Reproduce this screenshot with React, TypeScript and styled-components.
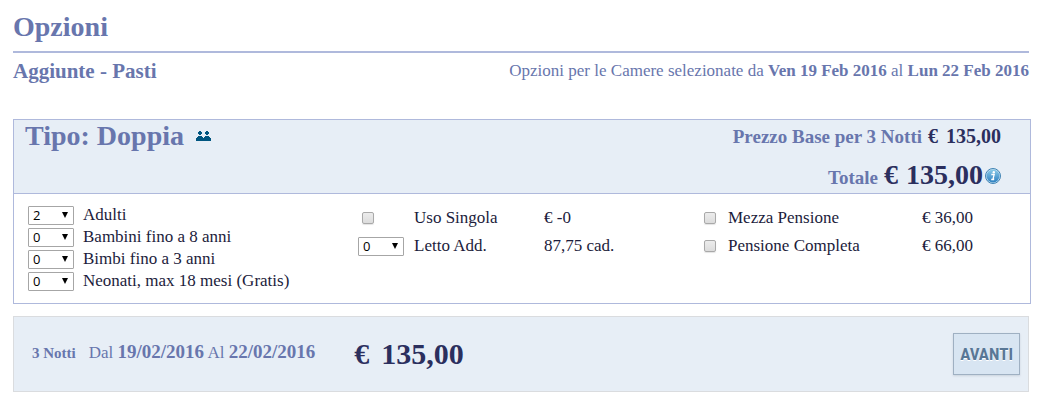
import React, { useId } from "react";
import styled, { createGlobalStyle } from "styled-components";

const GlobalStyle = createGlobalStyle`
  * { box-sizing: border-box; }
  body {
    margin: 0;
    background: #fff;
    color: #1c1c3c;
    font-family: Georgia, "Liberation Serif", serif;
    font-size: 17px;
    line-height: 20px;
  }
`;

const Page = styled.main`
  padding: 12px 8px 12px 13px;
`;

const Title = styled.h1`
  margin: 0 2px 0 0;
  padding-bottom: 9px;
  border-bottom: 2px solid #afb9dc;
  color: #6876ad;
  font-size: 28px;
  line-height: 30px;
`;

const SubHeader = styled.header`
  display: flex;
  justify-content: space-between;
  align-items: flex-start;
  margin: 6px 2px 36px 0;
  color: #6876ad;
`;

const SubTitle = styled.h2`
  margin: 0;
  font-size: 21px;
  line-height: 24px;
`;

const Note = styled.p`
  margin: 0;
  line-height: 24px;
`;

const RoomPanel = styled.section`
  border: 1px solid #afb9dc;
`;

const RoomHeader = styled.header`
  display: flex;
  justify-content: space-between;
  padding: 0 29px 0 11px;
  background: #e7eef6;
  border-bottom: 1px solid #afb9dc;
`;

const RoomTitle = styled.h3`
  display: flex;
  align-items: center;
  gap: 12px;
  height: 32px;
  margin: 0;
  color: #6876ad;
  font-size: 28px;
  line-height: 32px;
`;

const Prices = styled.div`
  display: flex;
  flex-direction: column;
  align-items: flex-end;
  color: #6876ad;
  font-size: 19px;
  font-weight: bold;
`;

const PriceLine = styled.div<{ $height: number }>`
  display: flex;
  align-items: baseline;
  gap: 6px;
  height: ${(p) => p.$height}px;
  line-height: 32px;
`;

const Amount = styled.span<{ $size: number; $gap: number }>`
  display: inline-flex;
  gap: ${(p) => p.$gap}px;
  color: #2b2f5e;
  font-size: ${(p) => p.$size}px;
  font-weight: bold;
`;

const InfoButton = styled.button`
  align-self: center;
  display: block;
  width: 16px;
  height: 16px;
  margin-left: -4px;
  padding: 0;
  border: 0;
  background: none;
`;

const RoomBody = styled.div`
  display: grid;
  grid-template-columns: 330fr 342fr 330fr;
  padding: 10px 0 11px 14px;
`;

const Guests = styled.div`
  display: flex;
  flex-direction: column;
`;

const GuestRow = styled.div`
  display: flex;
  align-items: center;
  gap: 9px;
  height: 22px;
`;

const Extras = styled.div<{ $columns: string }>`
  display: grid;
  grid-template-columns: ${(p) => p.$columns};
  grid-auto-rows: 28px;
  align-content: start;
  align-items: center;
`;

const SelectBox = styled.span`
  position: relative;
  display: inline-block;
  width: 46px;
  height: 19px;

  &::after {
    content: "";
    position: absolute;
    top: 6px;
    right: 6px;
    border: solid transparent;
    border-width: 6px 3px 0;
    border-top-color: #000;
    pointer-events: none;
  }
`;

const Select = styled.select`
  appearance: none;
  display: block;
  width: 100%;
  height: 100%;
  padding: 0 0 0 4px;
  border: 1px solid #a6a6a6;
  border-radius: 1px;
  background: #fff;
  color: #000;
  font: 13px/17px "Open Sans", "Noto Sans", sans-serif;
`;

const Check = styled.input`
  appearance: none;
  width: 12px;
  height: 12px;
  margin: 0 0 0 4px;
  border: 1px solid #a9a9a9;
  border-radius: 2px;
  background: linear-gradient(#ececec, #dcdcdc);
  box-shadow: 0 1px 1px #e4e4e4;

  &:checked { background: #6876ad; }
`;

const Summary = styled.footer`
  display: flex;
  align-items: center;
  margin: 12px 2px 0 0;
  padding: 16px 8px 16px 18px;
  background: #e7eef6;
  border: 1px solid #dadcdf;
  color: #6876ad;
`;

const Stay = styled.div`
  display: flex;
  align-items: baseline;
  margin-right: 39px;
  padding-bottom: 3px;
`;

const Nights = styled.strong`
  margin-right: 13px;
  font-size: 15px;
`;

const Dates = styled.span`
  strong { font-size: 19px; }
`;

const NextButton = styled.button`
  height: 42px;
  margin-left: auto;
  padding: 0 6px;
  border: 1px solid #9fb0c2;
  background: #d8e5f2;
  box-shadow: 0 1px 2px #c9d2dc;
  color: #587796;
  font: bold 17px/40px "Roboto Condensed", Roboto, sans-serif;
  text-shadow: 0 1px 0 #fff;
`;

const PeopleIcon = () => (
  <svg width="15" height="10" viewBox="0 0 15 10" fill="#005580" aria-hidden="true">
    <path d="M3 0h2v1h1v2H5v1H3V3H2V1h1zM10 0h2v1h1v2h-1v1h-2V3H9V1h1z" />
    <path d="M0 10V7h1V6h1V5h4v1h1v1h1V6h1V5h4v1h1v1h1v3z" />
  </svg>
);

const InfoIcon = () => (
  <svg width="16" height="16" viewBox="0 0 16 16" aria-hidden="true">
    <defs>
      <linearGradient id="infoFill" x1="0" y1="0" x2="0" y2="1">
        <stop offset="0" stopColor="#8ccbe8" />
        <stop offset="1" stopColor="#2c7fc0" />
      </linearGradient>
    </defs>
    <circle cx="8" cy="8" r="7.5" fill="#c5e0f0" stroke="#3f83b4" />
    <circle cx="8" cy="8" r="6.5" fill="url(#infoFill)" />
    <circle cx="8.8" cy="4.3" r="1.2" fill="#fff" />
    <path d="M6.3 6.5h2.9L8 11h1.2M6.2 11.5h3" fill="none" stroke="#fff" strokeWidth="1.3" />
  </svg>
);

const Quantity = ({ id, initial = 0 }: { id: string; initial?: number }) => (
  <SelectBox>
    <Select id={id} defaultValue={initial}>
      {[0, 1, 2, 3, 4].map((n) => (
        <option key={n}>{n}</option>
      ))}
    </Select>
  </SelectBox>
);

const Guest = ({ label, initial }: { label: string; initial?: number }) => {
  const id = useId();
  return (
    <GuestRow>
      <Quantity id={id} initial={initial} />
      <label htmlFor={id}>{label}</label>
    </GuestRow>
  );
};

const Extra = ({ label, price, quantity }: { label: string; price: string; quantity?: boolean }) => {
  const id = useId();
  return (
    <>
      {quantity ? <Quantity id={id} /> : <Check type="checkbox" id={id} />}
      <label htmlFor={id}>{label}</label>
      <span>{price}</span>
    </>
  );
};

const Price = ({ value, size, gap }: { value: string; size: number; gap: number }) => (
  <Amount $size={size} $gap={gap}>
    <span>€</span>
    <span>{value}</span>
  </Amount>
);

export default function App() {
  return (
    <>
      <GlobalStyle />
      <Page>
        <Title>Opzioni</Title>
        <SubHeader>
          <SubTitle>Aggiunte - Pasti</SubTitle>
          <Note>
            Opzioni per le Camere selezionate da <strong>Ven 19 Feb 2016</strong> al{" "}
            <strong>Lun 22 Feb 2016</strong>
          </Note>
        </SubHeader>

        <RoomPanel>
          <RoomHeader>
            <RoomTitle>
              Tipo: Doppia
              <PeopleIcon />
            </RoomTitle>
            <Prices>
              <PriceLine $height={39}>
                Prezzo Base per 3 Notti
                <Price value="135,00" size={20} gap={8} />
              </PriceLine>
              <PriceLine $height={34}>
                Totale
                <Price value="135,00" size={28} gap={8} />
                <InfoButton type="button" aria-label="Informazioni">
                  <InfoIcon />
                </InfoButton>
              </PriceLine>
            </Prices>
          </RoomHeader>
          <RoomBody>
            <Guests>
              <Guest label="Adulti" initial={2} />
              <Guest label="Bambini fino a 8 anni" />
              <Guest label="Bimbi fino a 3 anni" />
              <Guest label="Neonati, max 18 mesi (Gratis)" />
            </Guests>
            <Extras $columns="56px 130px 1fr">
              <Extra label="Uso Singola" price="€ -0" />
              <Extra label="Letto Add." price="87,75 cad." quantity />
            </Extras>
            <Extras $columns="28px 194px 1fr">
              <Extra label="Mezza Pensione" price="€ 36,00" />
              <Extra label="Pensione Completa" price="€ 66,00" />
            </Extras>
          </RoomBody>
        </RoomPanel>

        <Summary>
          <Stay>
            <Nights>3 Notti</Nights>
            <Dates>
              Dal <strong>19/02/2016</strong> Al <strong>22/02/2016</strong>
            </Dates>
          </Stay>
          <Price value="135,00" size={30} gap={12} />
          <NextButton type="button">AVANTI</NextButton>
        </Summary>
      </Page>
    </>
  );
}
